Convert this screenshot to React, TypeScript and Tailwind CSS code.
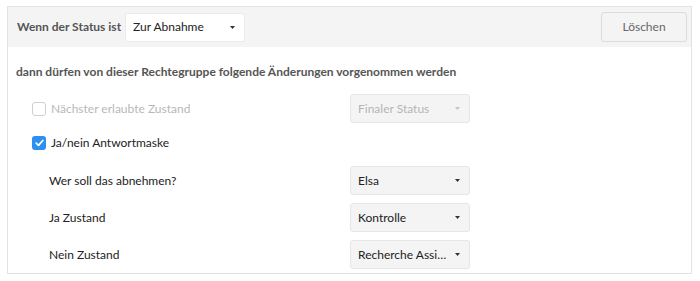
import React from "react";

const Caret = ({ light }: { light?: boolean }) => (
  <svg width="5" height="3" viewBox="0 0 5 3" className="shrink-0">
    <path d="M0 0 L5 0 L2.5 3 Z" fill={light ? "#c4c4c4" : "#333333"} />
  </svg>
);

const Select = ({
  value,
  disabled,
  white,
  className = "",
}: {
  value: string;
  disabled?: boolean;
  white?: boolean;
  className?: string;
}) => (
  <div
    className={`flex h-[29px] w-[120px] items-center justify-between gap-[8px] rounded-[3px] border pl-[7px] pr-[9px] ${
      white ? "border-[#ebebeb] bg-white" : "border-[#e6e6e8] bg-[#f4f4f5]"
    } ${disabled ? "text-[#b5b5b5]" : "text-[#222]"} ${className}`}
  >
    <span className="truncate">{value}</span>
    <Caret light={disabled} />
  </div>
);

const Check = ({ checked, disabled }: { checked?: boolean; disabled?: boolean }) =>
  checked ? (
    <div className="flex h-[14px] w-[14px] items-center justify-center rounded-[3px] bg-[#2d8ff0]">
      <svg width="9" height="8" viewBox="0 0 9 8">
        <path d="M1.2 4.2 L3.5 6.3 L7.8 1.5" stroke="white" strokeWidth="1.8" fill="none" strokeLinecap="round" strokeLinejoin="round" />
      </svg>
    </div>
  ) : (
    <div
      className={`h-[14px] w-[14px] rounded-[3px] border ${disabled ? "border-[#cfcfcf]" : "border-[#999]"} bg-white`}
    />
  );

export default function App() {
  return (
    <div
      className="h-[281px] w-[700px] bg-white pl-[7px] pt-[6px] text-[12px]"
      style={{ fontFamily: "Lato, 'Open Sans', sans-serif" }}
    >
      <div className="h-[268px] w-[685px] border border-[#e3e3e3]">
        <div className="flex h-[40px] items-center bg-[#f4f4f5] pl-[9px] pr-[4px]">
          <span className="w-[108px] font-bold text-[#555]">Wenn der Status ist</span>
          <Select value="Zur Abnahme" white className="w-[119px]" />
          <div className="ml-auto flex h-[30px] w-[86px] items-center justify-center rounded-[3px] border border-[#dcdcdc] bg-[#f4f4f5] text-[#666]">
            Löschen
          </div>
        </div>
        <div className="pl-[8px] pt-[15px]">
          <div className="flex h-[20px] items-center font-bold text-[#555]">
            dann dürfen von dieser Rechtegruppe folgende Änderungen vorgenommen werden
          </div>
          <div className="mt-[12px] flex h-[29px] items-center">
            <div className="flex w-[334px] items-center gap-[5px] pl-[16px] text-[#b8b8b8]">
              <Check disabled />
              <span>Nächster erlaubte Zustand</span>
            </div>
            <Select value="Finaler Status" disabled />
          </div>
          <div className="mt-[6px] flex h-[28px] items-center">
            <div className="flex items-center gap-[5px] pl-[16px] text-[#222]">
              <Check checked />
              <span>Ja/nein Antwortmaske</span>
            </div>
          </div>
          <div className="mt-[9px] flex flex-col gap-[8px]">
            {[
              ["Wer soll das abnehmen?", "Elsa"],
              ["Ja Zustand", "Kontrolle"],
              ["Nein Zustand", "Recherche Assistenz"],
            ].map(([l, v]) => (
              <div key={l} className="flex h-[29px] items-center">
                <span className="w-[334px] pl-[33px] text-[#222]">{l}</span>
                <Select value={v} />
              </div>
            ))}
          </div>
        </div>
      </div>
    </div>
  );
}
